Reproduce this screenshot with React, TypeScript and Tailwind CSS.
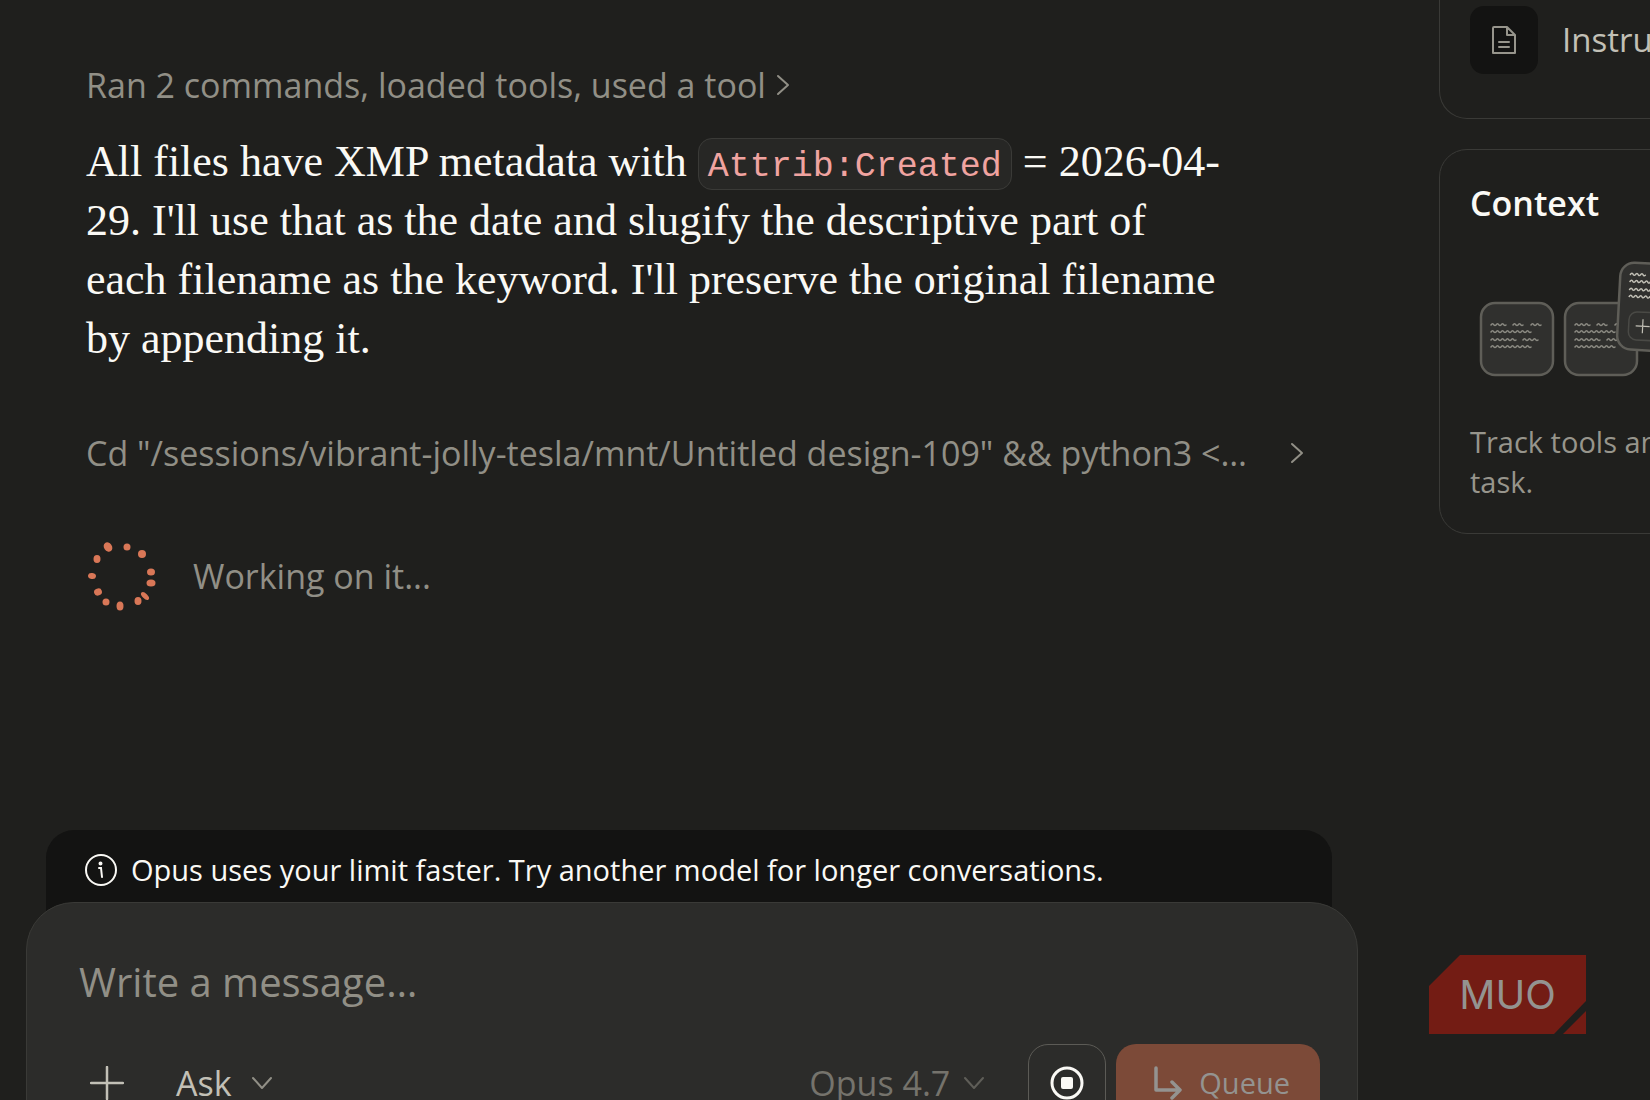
import type { ReactNode } from 'react'

const DOTS = [
    { x: 22, y: 7, rx: 4, ry: 5, turn: -35 },
    { x: 41, y: 7, rx: 3.5, ry: 3.5, turn: 0 },
    { x: 56, y: 14, rx: 4, ry: 4, turn: 0 },
    { x: 65, y: 32, rx: 4, ry: 3.5, turn: 0 },
    { x: 65, y: 43, rx: 4.5, ry: 3.5, turn: 0 },
    { x: 59, y: 56, rx: 2.5, ry: 5, turn: -45 },
    { x: 52, y: 61, rx: 3.5, ry: 4, turn: 0 },
    { x: 34, y: 66, rx: 3.5, ry: 4.5, turn: 0 },
    { x: 20, y: 62, rx: 3.5, ry: 3.5, turn: 0 },
    { x: 12, y: 52, rx: 4, ry: 3.5, turn: -20 },
    { x: 6, y: 36, rx: 4, ry: 3, turn: 10 },
    { x: 11, y: 19, rx: 3.5, ry: 4, turn: 0 },
]

function Spinner() {
    return (
        <svg viewBox="0 0 72 72" className="size-18 shrink-0" fill="#d97757" aria-hidden="true">
            {DOTS.map((d) => (
                <ellipse
                    key={`${d.x}-${d.y}`}
                    cx={d.x}
                    cy={d.y}
                    rx={d.rx}
                    ry={d.ry}
                    transform={`rotate(${d.turn} ${d.x} ${d.y})`}
                />
            ))}
        </svg>
    )
}

function ChevronRight() {
    return (
        <svg viewBox="0 0 14 24" className="h-6 w-3.5 shrink-0" fill="none" stroke="currentColor" strokeWidth="2" strokeLinecap="round" strokeLinejoin="round" aria-hidden="true">
            <path d="M2 3l10 9-10 9" />
        </svg>
    )
}

function ChevronDown() {
    return (
        <svg viewBox="0 0 20 14" className="h-3.5 w-5 shrink-0" fill="none" stroke="currentColor" strokeWidth="2" strokeLinecap="round" strokeLinejoin="round" aria-hidden="true">
            <path d="M1 2l9 10 9-10" />
        </svg>
    )
}

// one wavy "text" stroke, n waves long
function Wave({ x, y, n }: { x: number; y: number; n: number }) {
    return <path d={`M${x} ${y}${'q1.5 -2.5 3 0q1 1 2 0'.repeat(n)}`} />
}

function Lines() {
    return (
        <g fill="none" strokeWidth="1.5" strokeLinecap="round">
            <Wave x={10} y={22} n={3} />
            <Wave x={32} y={22} n={2} />
            <Wave x={50} y={22} n={2} />
            <Wave x={10} y={29} n={8} />
            <Wave x={10} y={37} n={5} />
            <Wave x={42} y={37} n={3} />
            <Wave x={10} y={44} n={8} />
        </g>
    )
}

function ContextArt() {
    return (
        <svg viewBox="0 0 270 130" className="h-[130px] w-[270px]" aria-hidden="true">
            <g stroke="#8b8a82">
                <g transform="translate(11 47)">
                    <rect width="72" height="72" rx="14" fill="#30302e" stroke="#5f5e58" strokeWidth="2.5" />
                    <Lines />
                </g>
                <g transform="translate(95 47)">
                    <rect width="72" height="72" rx="14" fill="#30302e" stroke="#5f5e58" strokeWidth="2.5" />
                    <Lines />
                </g>
            </g>
            <g transform="translate(151 6) rotate(3)">
                <rect width="100" height="87" rx="14" fill="#30302e" stroke="#5f5e58" strokeWidth="2.5" />
                <g stroke="#c2c0b6" transform="translate(0 -10)">
                    <Lines />
                </g>
                <rect x="11" y="49" width="48" height="28" rx="8" fill="none" stroke="#4a4a46" strokeWidth="1.5" />
                <path d="M25 56v14M18 63h14" stroke="#c2c0b6" strokeWidth="1.2" />
            </g>
        </svg>
    )
}

function Card({ className = '', children }: { className?: string; children: ReactNode }) {
    return <section className={`w-[680px] rounded-[28px] border border-[#3a3a37] px-[30px] ${className}`}>{children}</section>
}

function Sidebar() {
    return (
        <aside className="flex w-[211px] shrink-0 flex-col gap-[30px] overflow-hidden">
            <Card className="rounded-t-none border-t-0 pt-[6px] pb-[44px]">
                <button type="button" className="flex items-center gap-[24px] text-[33px] leading-[40px] text-[#c2c0b6]">
                    <span className="flex size-[68px] items-center justify-center rounded-[14px] bg-[#131312] text-[#97958c]">
                        <svg viewBox="0 0 26 30" className="h-[30px] w-[26px]" fill="none" stroke="currentColor" strokeWidth="2" strokeLinejoin="round" strokeLinecap="round" aria-hidden="true">
                            <path d="M3 2h13l8 8v18H2V3q0-1 1-1zM16 2v8h8M8 17h10M8 22h10" />
                        </svg>
                    </span>
                    Instructions
                </button>
            </Card>
            <Card className="pt-[33px] pb-[31px]">
                <h2 className="text-[34px] leading-[40px] font-semibold text-[#faf9f5]">Context</h2>
                <div className="mt-[33px] mb-[36px]">
                    <ContextArt />
                </div>
                <p className="text-[29px] leading-[40px] text-[#97958c]">
                    Track tools and referenced files used in this task.
                </p>
            </Card>
        </aside>
    )
}

function Transcript() {
    return (
        <div className="flex flex-1 flex-col items-start pt-[61px] pr-[52px] pl-[86px] text-[34px] leading-[48px] text-[#918f86]">
            <button type="button" className="flex items-center gap-[10px]">
                Ran 2 commands, loaded tools, used a tool
                <ChevronRight />
            </button>
            <p className="mt-[23px] max-w-[1144px] font-['Liberation_Serif',serif] text-[44px] leading-[59px] text-[#faf9f5]">
                All files have XMP metadata with{' '}
                <code className="rounded-[14px] border border-[#3a3a37] bg-[#272725] px-[9px] pt-[8px] pb-[2px] font-['Liberation_Mono',monospace] text-[35px] leading-[40px] text-[#f0a3a0]">
                    Attrib:Created
                </code>{' '}
                = 2026-04-
                <wbr />
                29. I'll use that as the date and slugify the descriptive part of each filename as the keyword. I'll preserve
                the original filename by appending it.
            </p>
            <button type="button" className="mt-[61px] flex items-center gap-[43px] whitespace-nowrap">
                Cd "/sessions/vibrant-jolly-tesla/mnt/Untitled design-109" && python3 {'<'}…
                <ChevronRight />
            </button>
            <div className="mt-[63px] flex items-center gap-[35px]" role="status">
                <Spinner />
                Working on it...
            </div>
        </div>
    )
}

function Composer() {
    return (
        <div className="-mb-[52px] shrink-0 pl-[26px]">
            <div className="mr-[26px] -mb-[40px] ml-[20px] flex items-center gap-[14px] rounded-t-[28px] bg-[#131312] px-[39px] pt-[20px] pb-[52px] text-[29px] leading-[40px] text-[#faf9f5]">
                <svg viewBox="0 0 32 32" className="size-8 shrink-0" fill="none" stroke="currentColor" strokeWidth="2" strokeLinecap="round" aria-hidden="true">
                    <circle cx="16" cy="16" r="15" />
                    <path d="M14 14h2l1 9" />
                    <circle cx="15.5" cy="9.5" r="1" fill="currentColor" />
                </svg>
                Opus uses your limit faster. Try another model for longer conversations.
            </div>
            <form className="relative rounded-[48px] border border-[#3a3a37] bg-[#2c2c2a] pt-[51px] pr-[37px] pb-[29px] pl-[52px]">
                <textarea
                    rows={1}
                    aria-label="Message"
                    placeholder="Write a message…"
                    className="block w-full resize-none overflow-hidden text-[40px] leading-[56px] outline-none placeholder:text-[#918f86]"
                />
                <div className="mt-[34px] flex items-center text-[34px] leading-[48px]">
                    <button type="button" aria-label="Add" className="ml-[11px] text-[#c2c0b6]">
                        <svg viewBox="0 0 34 34" className="size-[34px]" stroke="currentColor" strokeWidth="2.5" strokeLinecap="round" aria-hidden="true">
                            <path d="M17 1v32M1 17h32" />
                        </svg>
                    </button>
                    <button type="button" className="ml-[52px] flex items-center gap-[20px] text-[#c2c0b6]">
                        Ask
                        <span className="text-[#918f86]">
                            <ChevronDown />
                        </span>
                    </button>
                    <button type="button" className="ml-auto flex items-center gap-[14px] text-[#75736c]">
                        Opus 4.7
                        <span className="text-[#5f5e58]">
                            <ChevronDown />
                        </span>
                    </button>
                    <button type="button" aria-label="Stop" className="ml-[44px] flex size-[78px] items-center justify-center rounded-[20px] border border-[#5c5b56] text-[#faf9f5]">
                        <svg viewBox="0 0 34 34" className="size-[34px]" aria-hidden="true">
                            <circle cx="17" cy="17" r="15" fill="none" stroke="currentColor" strokeWidth="3" />
                            <rect x="11" y="11" width="12" height="12" rx="2" fill="currentColor" />
                        </svg>
                    </button>
                    <button type="submit" className="ml-[10px] flex h-[78px] items-center gap-[17px] rounded-[20px] bg-[#7c4a38] pr-[30px] pl-[38px] text-[29px] text-[#949390]">
                        <svg viewBox="0 0 28 34" className="h-[34px] w-[28px]" fill="none" stroke="currentColor" strokeWidth="3.5" strokeLinecap="round" strokeLinejoin="round" aria-hidden="true">
                            <path d="M2 2v22h24M18 16l8 8-8 8" />
                        </svg>
                        Queue
                    </button>
                </div>
            </form>
        </div>
    )
}

function Badge() {
    return (
        <div className="absolute right-[64px] bottom-[66px] grid h-[79px] w-[157px] place-items-center">
            <svg viewBox="0 0 157 79" className="col-start-1 row-start-1 size-full" fill="#731c14" aria-hidden="true">
                <path d="M31 0h126v46l-32 33H0V31z" />
                <path d="M157 56v23h-23z" />
            </svg>
            <span className="relative col-start-1 row-start-1 font-['Inter',sans-serif] text-[40px] leading-[40px] text-[#949390]">MUO</span>
        </div>
    )
}

export default function App() {
    return (
        <div className="relative flex h-screen overflow-hidden bg-[#1f1f1d] font-['Open_Sans',sans-serif]">
            <main className="mr-[81px] flex min-w-0 flex-1 flex-col">
                <Transcript />
                <Composer />
            </main>
            <Sidebar />
            <Badge />
        </div>
    )
}
